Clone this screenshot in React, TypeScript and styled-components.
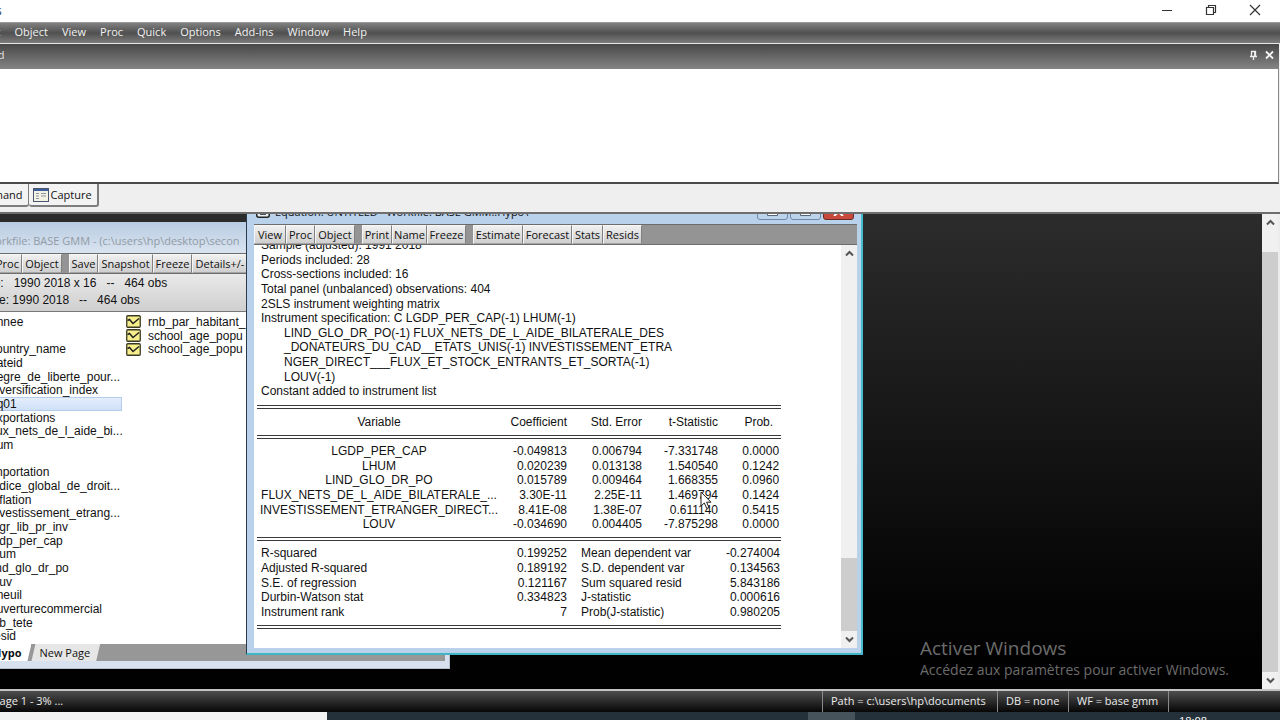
import React from "react";
import styled, { createGlobalStyle } from "styled-components";

const ui = `"Open Sans", "Noto Sans", sans-serif`;
const data = `"Liberation Sans", Arial, sans-serif`;

const Global = createGlobalStyle`
  * { box-sizing: border-box; }
  html, body { margin: 0; background: #000; }
  button { font: inherit; color: inherit; margin: 0; padding: 0; border: 0; background: none; }
`;

const Shell = styled.div`
  height: 100vh;
  overflow: hidden;
  display: flex;
  flex-direction: column;
  background: #efefef;
  font: 11px/16px ${ui};
  color: #111;
`;

/* ---------- application frame ---------- */

const TitleBar = styled.header`
  flex: none;
  height: 22px;
  background: #fff;
  display: flex;
  align-items: center;
  justify-content: space-between;
  padding-right: 19px;
`;
const AppName = styled.span`
  margin-left: -37px;
  font-size: 12px;
  color: #24384c;
`;
const Controls = styled.div`
  display: flex;
  gap: 32px;
  padding-bottom: 2px;
  button { display: flex; }
`;
const MenuBar = styled.nav`
  flex: none;
  height: 22px;
  display: flex;
  align-items: center;
  gap: 14px;
  margin-left: -19px;
  padding-bottom: 2px;
  border-top: 1px solid #9a9a9a;
  border-bottom: 1px solid #e4e4e4;
  background: linear-gradient(#808080, #505050 50%, #7c7c7c);
  color: #f2f2f2;
`;
const MenuItem = styled.button`
  white-space: nowrap;
`;
const PaneHeader = styled.div`
  flex: none;
  height: 25px;
  display: flex;
  align-items: center;
  justify-content: space-between;
  padding: 0 5px 3px 0;
  margin-right: 1px;
  background: linear-gradient(#474747, #858585);
  color: #e4e4e4;
`;
const PaneTitle = styled.span`
  margin-left: -49px;
`;
const PaneTools = styled.div`
  display: flex;
  gap: 7px;
  button { display: flex; }
`;
const CommandBox = styled.textarea`
  flex: none;
  display: block;
  width: calc(100% - 1px);
  height: 115px;
  border: 0;
  border-bottom: 2px solid #4a4a4a;
  border-right: 1px solid #888;
  outline: 0;
  resize: none;
  background: #fff;
`;
const TabStrip = styled.div`
  flex: none;
  height: 30px;
  display: flex;
  align-items: flex-start;
  background: #efefef;
  border-bottom: 2px solid #6e6e6e;
`;
const PaneTab = styled.button<{ $back?: boolean }>`
  height: 23px;
  display: flex;
  align-items: center;
  gap: 2px;
  padding: 0 5px 0 4px;
  margin-left: ${(p) => (p.$back ? -36 : 0)}px;
  border: 1px solid #7d7d7d;
  border-top: 0;
  border-left-width: ${(p) => (p.$back ? 1 : 0)}px;
  border-right-width: ${(p) => (p.$back ? 1 : 2)}px;
  border-bottom-width: 2px;
  border-radius: 0 0 3px 3px;
  background: #f3f3f3;
`;

/* ---------- workspace ---------- */

const Workspace = styled.main`
  flex: 1;
  min-height: 0;
  display: flex;
  background: #ececec;
  padding-right: 2px;
`;
const Desktop = styled.div`
  position: relative;
  flex: 1;
  overflow: hidden;
  background: linear-gradient(#2c2c2c, #1b1b1b 35%, #050505 80%, #000);
`;
const Scroll = styled.div`
  flex: none;
  width: 16px;
  display: flex;
  flex-direction: column;
  align-items: center;
  background: #f0f0f0;
  svg { flex: none; margin: 5px 0; }
`;
const Thumb = styled.div<{ $top: number; $h?: number }>`
  width: 100%;
  margin-top: ${(p) => p.$top}px;
  flex: ${(p) => (p.$h ? `0 0 ${p.$h}px` : "1")};
  background: #cdcdcd;
`;
const Push = styled.div`
  flex: 1;
`;

const Toolbar = styled.div`
  flex: none;
  height: 21px;
  display: flex;
  background: #949494;
  border-top: 1px solid #6d6d6d;
  border-bottom: 1px solid #6d6d6d;
`;
const ToolButton = styled.button<{ $w: number; $gap?: boolean }>`
  flex: none;
  width: ${(p) => p.$w}px;
  margin-left: ${(p) => (p.$gap ? 7 : 0)}px;
  border: 1px solid #f6f6f6;
  border-right-color: #808080;
  border-bottom-color: #a4a4a4;
  background: linear-gradient(#f0f0f0, #cfcfcf);
  line-height: 16px;
  text-align: center;
  white-space: nowrap;
`;

/* ---------- workfile window ---------- */

const Workfile = styled.section`
  position: absolute;
  left: 0;
  top: 8px;
  width: 450px;
  height: 447px;
  display: flex;
  flex-direction: column;
  background: #d6e0ee;
  border-right: 1px solid #b4bfcc;
  border-bottom: 1px solid #b4bfcc;
  padding: 0 4px 7px 0;
`;
const WorkfileTitle = styled.div`
  flex: none;
  height: 31px;
  padding-top: 11px;
  margin-left: -15px;
  white-space: nowrap;
  color: #929aa4;
  background: linear-gradient(#b8cce2, #dae4f0);
`;
const WorkfileTools = styled(Toolbar)`
  > :first-child { margin-left: -7px; }
`;
const Info = styled.div`
  flex: none;
  height: 38px;
  padding-top: 1px;
  margin-left: -35px;
  font: 12px/17px ${data};
  white-space: pre;
  background: linear-gradient(#e9e9e9, #cfcfcf);
  border-bottom: 1px solid #777;
`;
const Objects = styled.div`
  flex: 1;
  min-height: 0;
  display: flex;
  background: #fff;
  padding: 3px 0 1px;
  font: 12px/14px ${data};
`;
const ObjectColumn = styled.ul`
  list-style: none;
  margin: 0;
  padding: 0;
  flex: none;
  width: 122px;
  display: grid;
  grid-template-columns: minmax(0, 1fr);
  grid-template-rows: repeat(24, minmax(0, 1fr));
  white-space: nowrap;
`;
const ObjectName = styled.li<{ $on?: boolean }>`
  text-indent: -10px;
  border: 1px solid ${(p) => (p.$on ? "#b4cdec" : "transparent")};
  border-left: 0;
  background: ${(p) => (p.$on ? "linear-gradient(#e4eefc, #cfe0f8)" : "none")};
  line-height: 12px;
`;
const SeriesColumn = styled(ObjectColumn)`
  padding-left: 4px;
`;
const SeriesName = styled.li`
  display: flex;
  align-items: center;
  gap: 7px;
  svg { flex: none; }
`;
const PageTabs = styled.div`
  flex: none;
  height: 17px;
  display: flex;
  background: #979797;
`;
const PageTab = styled.button<{ $on?: boolean }>`
  height: 17px;
  padding: 0 10px 0 8px;
  margin-left: ${(p) => (p.$on ? -15 : 0)}px;
  font-weight: ${(p) => (p.$on ? 700 : 400)};
  background: ${(p) => (p.$on ? "#fff" : "#e6e6e6")};
  clip-path: polygon(4px 0, 100% 0, calc(100% - 4px) 100%, 0 100%);
`;

/* ---------- equation window ---------- */

const Equation = styled.section`
  position: absolute;
  left: 246px;
  top: -13px;
  width: 617px;
  height: 454px;
  display: flex;
  flex-direction: column;
  padding: 0 4px 5px 7px;
  background: #b9d1ea;
  border: 1px solid #2b3a48;
  border-right: 2px solid #43bcd0;
  border-bottom: 2px solid #43b4c4;
`;
const EquationTitle = styled.div`
  flex: none;
  height: 22px;
  display: flex;
  align-items: center;
  justify-content: space-between;
  padding: 0 3px 2px 2px;
`;
const TitleText = styled.span`
  display: flex;
  align-items: center;
  gap: 5px;
  white-space: pre;
`;
const Caption = styled.div`
  display: flex;
  gap: 2px;
`;
const CaptionButton = styled.button<{ $close?: boolean }>`
  width: 31px;
  height: 16px;
  display: flex;
  align-items: center;
  justify-content: center;
  border: 1px solid ${(p) => (p.$close ? "#6a2a26" : "#6f8aa8")};
  border-radius: 0 0 3px 3px;
  background: ${(p) => (p.$close ? "#c8493b" : "#bdd3ea")};
`;
const Body = styled.div`
  flex: 1;
  min-height: 0;
  display: flex;
  background: #fff;
`;
const Output = styled.div`
  flex: 1;
  overflow: hidden;
  padding-left: 3px;
  font: 12px/14px ${data};
`;
const Sheet = styled.div`
  width: 524px;
  margin-top: -7px;
`;
const Spec = styled.div`
  height: 161px;
  padding-left: 4px;
  display: grid;
  grid-template-rows: repeat(11, 1fr);
  white-space: nowrap;
`;
const Line = styled.div<{ $in?: boolean }>`
  padding-left: ${(p) => (p.$in ? 23 : 0)}px;
`;
const Table = styled.table<{ $h: number }>`
  width: 524px;
  height: ${(p) => p.$h}px;
  table-layout: fixed;
  border-collapse: collapse;
  white-space: nowrap;
  th, td { padding: 0 1px 0 0; font-weight: 400; text-align: right; line-height: 14px; }
  thead th, thead td { height: 15px; }
`;
const Col = styled.col<{ $w: number }>`
  width: ${(p) => p.$w}px;
`;
const Name = styled.td`
  && { text-align: center; }
`;
const Label = styled.td<{ $pad: number }>`
  && { text-align: left; padding-left: ${(p) => p.$pad}px; }
`;
const ProbHead = styled.th`
  && { padding-right: 8px; }
`;
const Prob = styled.td`
  && { padding-right: 2px; }
`;
const Rule = styled.hr`
  margin: 5px -1px 5px 0;
  border: 0;
  border-top: 4px double #3a3a3a;
`;
const Pointer = styled.svg`
  position: absolute;
  left: 453px;
  top: 289px;
`;

/* ---------- bottom ---------- */

const Watermark = styled.div`
  position: absolute;
  right: 33px;
  bottom: 9px;
  color: #6c6c6c;
  font-size: 14px;
  line-height: 20px;
  white-space: nowrap;
`;
const WatermarkTitle = styled.div`
  font-size: 19px;
  line-height: 24px;
`;
const StatusBar = styled.footer`
  flex: none;
  height: 23px;
  display: flex;
  border-top: 2px solid #c4c4c4;
  background: linear-gradient(#4e4e4e, #060606);
  color: #ececec;
  line-height: 20px;
`;
const StatusText = styled.div`
  flex: 1;
  margin-left: -7px;
`;
const Cell = styled.div<{ $w: number }>`
  flex: none;
  width: ${(p) => p.$w}px;
  padding-left: 8px;
  border-left: 1px solid #8a8a8a;
  white-space: nowrap;
`;
const Taskbar = styled.div`
  flex: none;
  height: 8px;
  display: flex;
  overflow: hidden;
  background: #24313a;
`;
const SearchBox = styled.div`
  width: 327px;
  background: #f2f2f2;
`;
const ActiveTask = styled.div`
  width: 47px;
  margin-left: 481px;
  background: #47535b;
`;
const Clock = styled.time`
  margin-left: auto;
  padding: 1px 73px 0 0;
  color: #fff;
`;

const Chevron = ({ up }: { up?: boolean }) => (
  <svg width="9" height="7" viewBox="0 0 9 7" fill="none" stroke="#555" strokeWidth="2">
    <path d={up ? "M1 5.5 4.5 2 8 5.5" : "M1 1.5 4.5 5 8 1.5"} />
  </svg>
);
const SeriesIcon = () => (
  <svg width="15" height="13" viewBox="0 0 15 13">
    <rect x="0.75" y="0.75" width="13.5" height="11.5" rx="1" fill="#f7ee8c" stroke="#3a3a22" strokeWidth="1.3" />
    <path d="M1.5 5.5 3.5 4.5 7 8.5 13 3.5" fill="none" stroke="#222" strokeWidth="1.5" />
  </svg>
);

const objects = [
  "annee", "", "country_name", "dateid", "degre_de_liberte_pour...", "diversification_index", "eq01",
  "exportations", "flux_nets_de_l_aide_bi...", "hum", "", "importation", "indice_global_de_droit...",
  "inflation", "investissement_etrang...", "lagr_lib_pr_inv", "lgdp_per_cap", "lhum", "lind_glo_dr_po",
  "louv", "nneuil", "ouverturecommercial", "pib_tete", "resid",
];
const series = ["rnb_par_habitant_", "school_age_popu", "school_age_popu"];
const spec: [string, boolean?][] = [
  ["Sample (adjusted): 1991 2018"],
  ["Periods included: 28"],
  ["Cross-sections included: 16"],
  ["Total panel (unbalanced) observations: 404"],
  ["2SLS instrument weighting matrix"],
  ["Instrument specification: C LGDP_PER_CAP(-1) LHUM(-1)"],
  ["LIND_GLO_DR_PO(-1) FLUX_NETS_DE_L_AIDE_BILATERALE_DES", true],
  ["_DONATEURS_DU_CAD__ETATS_UNIS(-1) INVESTISSEMENT_ETRA", true],
  ["NGER_DIRECT___FLUX_ET_STOCK_ENTRANTS_ET_SORTA(-1)", true],
  ["LOUV(-1)", true],
  ["Constant added to instrument list"],
];
const coefs = [
  ["LGDP_PER_CAP", "-0.049813", "0.006794", "-7.331748", "0.0000"],
  ["LHUM", "0.020239", "0.013138", "1.540540", "0.1242"],
  ["LIND_GLO_DR_PO", "0.015789", "0.009464", "1.668355", "0.0960"],
  ["FLUX_NETS_DE_L_AIDE_BILATERALE_...", "3.30E-11", "2.25E-11", "1.469794", "0.1424"],
  ["INVESTISSEMENT_ETRANGER_DIRECT...", "8.41E-08", "1.38E-07", "0.611140", "0.5415"],
  ["LOUV", "-0.034690", "0.004405", "-7.875298", "0.0000"],
];
const stats = [
  ["R-squared", "0.199252", "Mean dependent var", "-0.274004"],
  ["Adjusted R-squared", "0.189192", "S.D. dependent var", "0.134563"],
  ["S.E. of regression", "0.121167", "Sum squared resid", "5.843186"],
  ["Durbin-Watson stat", "0.334823", "J-statistic", "0.000616"],
  ["Instrument rank", "7", "Prob(J-statistic)", "0.980205"],
];
const workfileTools: [string, number, boolean?][] = [
  ["Proc", 29], ["Object", 40], ["Save", 29, true], ["Snapshot", 55], ["Freeze", 39], ["Details+/-", 56],
];
const equationTools: [string, number, boolean?][] = [
  ["View", 32], ["Proc", 29], ["Object", 40], ["Print", 30, true], ["Name", 35], ["Freeze", 39],
  ["Estimate", 50, true], ["Forecast", 49], ["Stats", 31], ["Resids", 39],
];

const RuleRow = ({ span }: { span: number }) => (
  <tr><td colSpan={span}><Rule /></td></tr>
);

export default function App() {
  return (
    <Shell>
      <Global />
      <TitleBar>
        <AppName>EViews</AppName>
        <Controls>
          <button aria-label="Minimize">
            <svg width="12" height="12" stroke="#333"><path d="M1 6.5h10" /></svg>
          </button>
          <button aria-label="Restore">
            <svg width="12" height="12" fill="none" stroke="#333" strokeWidth="1.2"><path d="M1.5 3.5h7v7h-7zM3.5 3.5v-2h7v7h-2" /></svg>
          </button>
          <button aria-label="Close">
            <svg width="12" height="12" stroke="#333" strokeWidth="1.2"><path d="M1 1l10 10M11 1 1 11" /></svg>
          </button>
        </Controls>
      </TitleBar>
      <MenuBar>
        {["Edit", "Object", "View", "Proc", "Quick", "Options", "Add-ins", "Window", "Help"].map((m) => (
          <MenuItem key={m}>{m}</MenuItem>
        ))}
      </MenuBar>
      <PaneHeader>
        <PaneTitle>Command</PaneTitle>
        <PaneTools>
          <button aria-label="Pin">
            <svg width="9" height="10" fill="none" stroke="#eee" strokeWidth="1.3"><path d="M2.5 6V1.5h4V6M1 6.5h7M4.5 6.5V10M5.7 2v4" /></svg>
          </button>
          <button aria-label="Close pane">
            <svg width="9" height="10" stroke="#f4f4f4" strokeWidth="1.8"><path d="M1 1.5l7 7M8 1.5l-7 7" /></svg>
          </button>
        </PaneTools>
      </PaneHeader>
      <CommandBox aria-label="Command" />
      <TabStrip>
        <PaneTab $back>Command</PaneTab>
        <PaneTab>
          <svg width="16" height="14" viewBox="0 0 16 14">
            <rect x="0.5" y="0.5" width="15" height="13" fill="#f4f2e2" stroke="#4a5570" />
            <path d="M1 2h14" stroke="#3d5f9e" strokeWidth="2" />
            <path d="M3 5.5h3M3 8h3M3 10.5h3M8 5.5h5M8 8h5" stroke="#8c93a2" />
          </svg>
          Capture
        </PaneTab>
      </TabStrip>

      <Workspace>
        <Desktop>
          <Watermark>
            <WatermarkTitle>Activer Windows</WatermarkTitle>
            Accédez aux paramètres pour activer Windows.
          </Watermark>

          <Workfile>
            <WorkfileTitle>Workfile: BASE GMM - (c:\users\hp\desktop\secon</WorkfileTitle>
            <WorkfileTools>
              {workfileTools.map(([t, w, g]) => <ToolButton key={t} $w={w} $gap={g}>{t}</ToolButton>)}
            </WorkfileTools>
            <Info>
              <div>{"Range:   1990 2018 x 16   --   464 obs"}</div>
              <div>{"Sample: 1990 2018   --   464 obs"}</div>
            </Info>
            <Objects>
              <ObjectColumn>
                {objects.map((o, i) => <ObjectName key={i} $on={o === "eq01"}>{o}</ObjectName>)}
              </ObjectColumn>
              <SeriesColumn>
                {series.map((s, i) => <SeriesName key={i}><SeriesIcon />{s}</SeriesName>)}
              </SeriesColumn>
            </Objects>
            <PageTabs>
              <PageTab $on>Hypo</PageTab>
              <PageTab>New Page</PageTab>
            </PageTabs>
          </Workfile>

          <Equation>
            <EquationTitle>
              <TitleText>
                <svg width="14" height="12" viewBox="0 0 14 12">
                  <rect x="0.75" y="0.75" width="12.5" height="10.5" rx="2" fill="#e8f0f8" stroke="#222" strokeWidth="1.5" />
                  <path d="M4 5h6M4 8h6" stroke="#222" strokeWidth="1.3" />
                </svg>
                {"Equation: UNTITLED   Workfile: BASE GMM::Hypo\\"}
              </TitleText>
              <Caption>
                <CaptionButton aria-label="Minimize window"><svg width="11" height="8" fill="#fff" stroke="#56677a"><path d="M.5 4.5h10v3H.5z" /></svg></CaptionButton>
                <CaptionButton aria-label="Maximize window"><svg width="11" height="8" fill="#fff" stroke="#56677a"><path d="M.5.5h10v7H.5z" /></svg></CaptionButton>
                <CaptionButton $close aria-label="Close window"><svg width="11" height="8" stroke="#fff" strokeWidth="2"><path d="M1 0l9 8M10 0 1 8" /></svg></CaptionButton>
              </Caption>
            </EquationTitle>
            <Toolbar>
              {equationTools.map(([t, w, g]) => <ToolButton key={t} $w={w} $gap={g}>{t}</ToolButton>)}
            </Toolbar>
            <Body>
              <Output>
                <Sheet>
                  <Spec>{spec.map(([t, indent]) => <Line key={t} $in={indent}>{t}</Line>)}</Spec>
                  <Table $h={147}>
                    <colgroup><Col $w={245} /><Col $w={66} /><Col $w={75} /><Col $w={76} /><Col $w={62} /></colgroup>
                    <thead>
                      <RuleRow span={5} />
                      <tr>
                        <Name as="th">Variable</Name><th>Coefficient</th><th>Std. Error</th><th>t-Statistic</th><ProbHead>Prob.</ProbHead>
                      </tr>
                      <RuleRow span={5} />
                    </thead>
                    <tbody>
                      {coefs.map(([n, c, s, t, p]) => (
                        <tr key={n}><Name>{n}</Name><td>{c}</td><td>{s}</td><td>{t}</td><Prob>{p}</Prob></tr>
                      ))}
                      <RuleRow span={5} />
                    </tbody>
                  </Table>
                  <Table $h={88}>
                    <colgroup><Col $w={245} /><Col $w={66} /><Col $w={137} /><Col $w={76} /></colgroup>
                    <tbody>
                      {stats.map(([a, b, c, d]) => (
                        <tr key={a}><Label $pad={4}>{a}</Label><td>{b}</td><Label $pad={13}>{c}</Label><td>{d}</td></tr>
                      ))}
                      <RuleRow span={4} />
                    </tbody>
                  </Table>
                </Sheet>
              </Output>
              <Scroll>
                <Chevron up />
                <Push />
                <Thumb $top={0} $h={73} />
                <Chevron />
              </Scroll>
            </Body>
            <Pointer width="12" height="19" viewBox="0 0 12 19">
              <path d="M1 1v14l3.3-3 2.5 5.5 2.2-1-2.4-5.3H11z" fill="#fff" stroke="#222" />
            </Pointer>
          </Equation>
        </Desktop>
        <Scroll>
          <Chevron up />
          <Thumb $top={21} />
          <Chevron />
        </Scroll>
      </Workspace>

      <StatusBar>
        <StatusText>Page 1 - 3% ...</StatusText>
        <Cell $w={175}>Path = c:\users\hp\documents</Cell>
        <Cell $w={71}>DB = none</Cell>
        <Cell $w={100}>WF = base gmm</Cell>
        <Cell $w={112} />
      </StatusBar>
      <Taskbar>
        <SearchBox />
        <ActiveTask />
        <Clock>18:08</Clock>
      </Taskbar>
    </Shell>
  );
}
